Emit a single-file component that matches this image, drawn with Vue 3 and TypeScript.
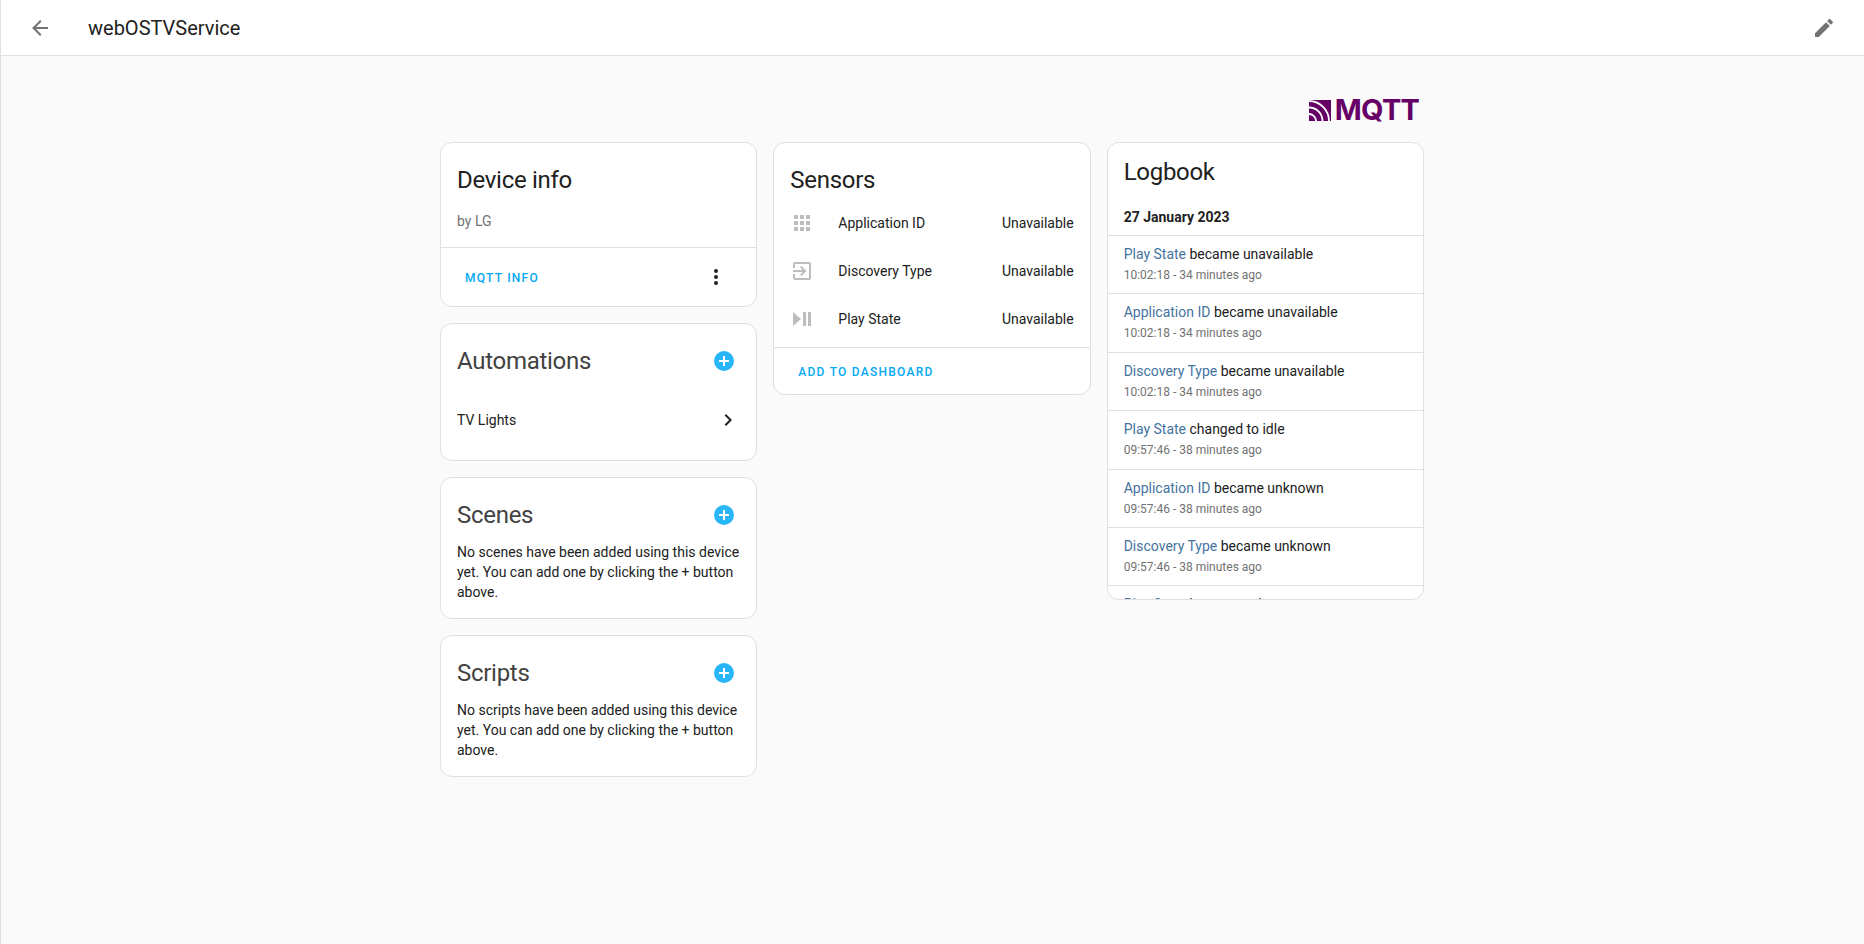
<script setup lang="ts">
interface LogEntry { name: string; rest: string; time: string }
const sensors = [
  { name: 'Application ID', d: 'M16 20H20V16H16M16 14H20V10H16M10 8H14V4H10M16 8H20V4H16M10 14H14V10H10M4 14H8V10H4M4 20H8V16H4M10 20H14V16H10M4 8H8V4H4V8Z' },
  { name: 'Discovery Type', d: 'M19 3H5C3.89 3 3 3.89 3 5V9H5V5H19V19H5V15H3V19A2 2 0 0 0 5 21H19A2 2 0 0 0 21 19V5C21 3.89 20.1 3 19 3M10.08 15.58L11.5 17L16.5 12L11.5 7L10.08 8.41L12.67 11H3V13H12.67L10.08 15.58Z' },
  { name: 'Play State', d: 'M3 5V19L11 12M13 19H16V5H13M18 5V19H21V5' },
]
const logs: LogEntry[] = [
  { name: 'Play State', rest: ' became unavailable', time: '10:02:18 - 34 minutes ago' },
  { name: 'Application ID', rest: ' became unavailable', time: '10:02:18 - 34 minutes ago' },
  { name: 'Discovery Type', rest: ' became unavailable', time: '10:02:18 - 34 minutes ago' },
  { name: 'Play State', rest: ' changed to idle', time: '09:57:46 - 38 minutes ago' },
  { name: 'Application ID', rest: ' became unknown', time: '09:57:46 - 38 minutes ago' },
  { name: 'Discovery Type', rest: ' became unknown', time: '09:57:46 - 38 minutes ago' },
  { name: 'Play State', rest: ' became unknown', time: '09:57:46 - 38 minutes ago' },
]
const plus = 'M17 13H13V17H11V13H7V11H11V7H13V11H17M12 2A10 10 0 0 0 2 12A10 10 0 0 0 12 22A10 10 0 0 0 22 12A10 10 0 0 0 12 2Z'
const empties = [
  { title: 'Scenes', text: 'No scenes have been added using this device yet. You can add one by clicking the + button above.' },
  { title: 'Scripts', text: 'No scripts have been added using this device yet. You can add one by clicking the + button above.' },
]
</script>

<template>
  <div class="page">
    <header class="topbar">
      <svg class="icon back" viewBox="0 0 24 24"><path d="M20 11V13H8L13.5 18.5L12.08 19.92L4.16 12L12.08 4.08L13.5 5.5L8 11H20Z" /></svg>
      <div class="pagetitle">webOSTVService</div>
      <svg class="icon edit" viewBox="0 0 24 24"><path d="M20.71 7.04C21.1 6.65 21.1 6 20.71 5.63L18.37 3.29C18 2.9 17.35 2.9 16.96 3.29L15.12 5.12L18.87 8.87M3 17.25V21H6.75L17.81 9.93L14.06 6.18L3 17.25Z" /></svg>
    </header>
    <main class="container">
      <div class="logo-row">
        <div class="logo">
          <svg class="logo-mark" viewBox="0 0 22 21">
            <rect width="22" height="21" fill="#660066" />
            <g fill="none" stroke="#fafafa" stroke-width="1.8">
              <circle cx="0" cy="21" r="7" />
              <circle cx="0" cy="21" r="13.5" />
              <circle cx="0" cy="21" r="20" />
            </g>
          </svg>
          <span class="logo-text">MQTT</span>
        </div>
      </div>
      <div class="columns">
        <div class="column">
          <section class="card">
            <div class="info-body">
              <h2 class="title dark">Device info</h2>
              <div class="by">by LG</div>
            </div>
            <div class="actions between">
              <span class="btn">MQTT INFO</span>
              <svg class="icon dots" viewBox="0 0 24 24"><path d="M12 16A2 2 0 0 1 14 18A2 2 0 0 1 12 20A2 2 0 0 1 10 18A2 2 0 0 1 12 16M12 10A2 2 0 0 1 14 12A2 2 0 0 1 12 14A2 2 0 0 1 10 12A2 2 0 0 1 12 10M12 4A2 2 0 0 1 14 6A2 2 0 0 1 12 8A2 2 0 0 1 10 6A2 2 0 0 1 12 4Z" /></svg>
            </div>
          </section>
          <section class="card">
            <div class="head">
              <h2 class="title">Automations</h2>
              <svg class="icon add" viewBox="0 0 24 24"><path :d="plus" /></svg>
            </div>
            <div class="auto-row">
              <span>TV Lights</span>
              <svg class="icon chevron" viewBox="0 0 24 24"><path d="M8.59 16.58L13.17 12L8.59 7.41L10 6L16 12L10 18L8.59 16.58Z" /></svg>
            </div>
          </section>
          <section v-for="e in empties" :key="e.title" class="card">
            <div class="head">
              <h2 class="title">{{ e.title }}</h2>
              <svg class="icon add" viewBox="0 0 24 24"><path :d="plus" /></svg>
            </div>
            <p class="empty">{{ e.text }}</p>
          </section>
        </div>
        <div class="column">
          <section class="card">
            <h2 class="title dark sensors-title">Sensors</h2>
            <div class="sensor-list">
              <div v-for="s in sensors" :key="s.name" class="sensor">
                <svg class="icon sensor-icon" viewBox="0 0 24 24"><path :d="s.d" /></svg>
                <span class="sensor-name">{{ s.name }}</span>
                <span>Unavailable</span>
              </div>
            </div>
            <div class="actions short">
              <span class="btn">ADD TO DASHBOARD</span>
            </div>
          </section>
        </div>
        <div class="column">
          <section class="card logbook">
            <h2 class="title dark log-title">Logbook</h2>
            <div class="log-date">27 January 2023</div>
            <div v-for="(l, i) in logs" :key="i" class="log-entry">
              <div><span class="log-link">{{ l.name }}</span>{{ l.rest }}</div>
              <div class="log-time">{{ l.time }}</div>
            </div>
          </section>
        </div>
      </div>
    </main>
  </div>
</template>

<style>
html, body { margin: 0; background: #fafafa; }
</style>

<style scoped>
.page {
  min-height: 944px;
  box-sizing: border-box;
  border-left: 1px solid #e0e0e0;
  background: #fafafa;
  font-family: Roboto, "Liberation Sans", sans-serif;
  font-size: 14px;
  line-height: 20px;
  color: #212121;
}
.topbar {
  height: 56px;
  box-sizing: border-box;
  border-bottom: 1px solid #e0e0e0;
  background: #fff;
  display: flex;
  align-items: center;
  padding: 1px 28px 0 27px;
}
.icon { display: block; width: 24px; height: 24px; fill: currentColor; flex: none; }
.back, .edit { color: #727272; }
.pagetitle { font-size: 20px; margin-left: 36px; flex: 1; }
.container {
  width: 1000px;
  box-sizing: border-box;
  margin: 0 0 0 431px;
  padding: 0 8px;
}
.logo-row {
  display: flex;
  justify-content: flex-end;
  height: 86px;
  padding-right: 5px;
  box-sizing: border-box;
}
.logo { display: flex; align-items: center; gap: 4px; height: 24px; margin-top: 42px; color: #660066; }
.logo-mark { width: 22px; height: 21px; display: block; }
.logo-text { font-family: Inter, sans-serif; font-weight: 700; font-size: 29px; line-height: 24px; letter-spacing: -0.8px; }
.columns { display: grid; grid-template-columns: repeat(3, 1fr); gap: 16px; align-items: start; }
.column { display: flex; flex-direction: column; gap: 16px; min-width: 0; }
.card {
  background: #fff;
  border: 1px solid #e0e0e0;
  border-radius: 12px;
  box-sizing: border-box;
  overflow: hidden;
}
.title { margin: 0; font-size: 24px; line-height: 32px; font-weight: 400; color: #424242; letter-spacing: -0.288px; }
.title.dark { color: #212121; }
.info-body { padding: 21px 16px 0; height: 104px; box-sizing: border-box; }
.by { margin-top: 15px; color: #727272; }
.actions { height: 59px; box-sizing: border-box; border-top: 1px solid #e0e0e0; display: flex; align-items: center; padding: 2px 24px 0; }
.actions.between { justify-content: space-between; padding-right: 28px; }
.actions.short { height: 47px; }
.actions.between .dots { margin-top: -2px; }
.btn { font-size: 12px; font-weight: 500; letter-spacing: 1.25px; color: #03a9f4; }
.dots { color: #212121; }
.head { display: flex; justify-content: space-between; align-items: center; padding: 21px 20px 0 16px; }
.add { color: #29b6f6; margin-top: -1px; }
.auto-row { display: flex; justify-content: space-between; align-items: center; height: 48px; margin: 19px 0 16px; padding: 0 16px; }
.chevron { color: #212121; }
.empty { margin: 11px 16px 16px; }
.sensors-title { padding: 21px 16px 0; }
.sensor-list { padding: 3px 16px 4px; }
.sensor { height: 48px; display: flex; align-items: center; }
.sensor-icon { color: #bdbdbd; }
.sensor-name { margin-left: 24px; flex: 1; }
.logbook { height: 458px; }
.log-title { padding: 13px 16px 0; }
.log-date { padding: 19px 16px 8px; font-weight: 700; }
.log-entry { border-top: 1px solid #e0e0e0; padding: 8px 16px; height: 58.4px; box-sizing: border-box; }
.log-link { color: #44739e; }
.log-time { font-size: 12px; color: #727272; margin-top: 1px; }
</style>
